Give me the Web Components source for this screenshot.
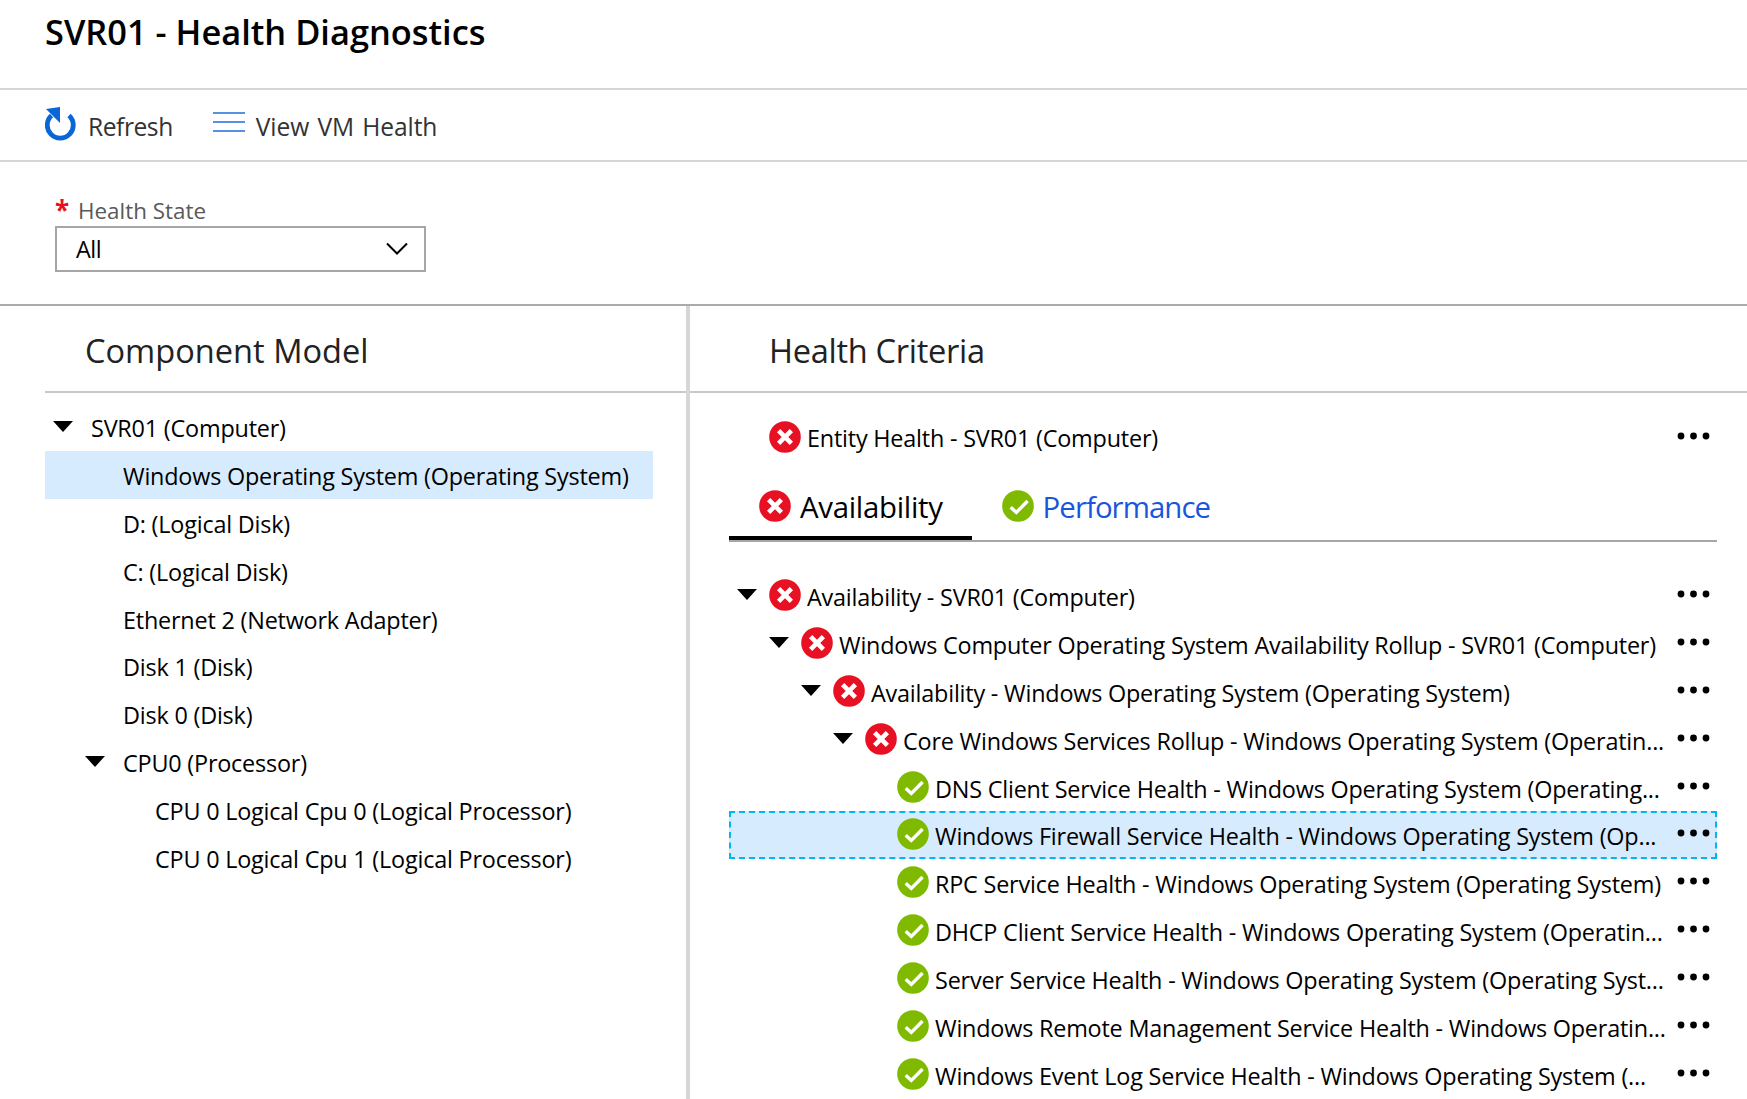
<!DOCTYPE html>
<html>
<head>
<meta charset="utf-8">
<title>SVR01 - Health Diagnostics</title>
<style>
    html, body { margin: 0; height: 100%; overflow: hidden; background: #fff; }
    body { font-family: "Open Sans", "Liberation Sans", sans-serif; color: #000; }
</style>
</head>
<body>
<health-page></health-page>

<script>
// status circle, red cross or green tick
class StatusIcon extends HTMLElement {
    connectedCallback() {
        let ok = this.getAttribute('state') === 'ok';
        let mark = ok
            ? '<path d="M8.7 17.2l5.6 5.2L25.6 11" fill="none" stroke="#fff" stroke-width="3.4"/>'
            : '<path d="M9.6 9.6l12.8 12.8M22.4 9.6L9.6 22.4" fill="none" stroke="#fff" stroke-width="4.6"/>';
        this.attachShadow({mode: 'open'}).innerHTML = `
        <style>
            :host { display: block; width: 32px; height: 32px; flex: none; }
            svg { display: block; }
        </style>
        <svg width="32" height="32" viewBox="0 0 32 32">
            <circle cx="16" cy="16" r="15.8" fill="${ok ? '#7fba00' : '#e81123'}"/>
            ${mark}
        </svg>`;
    }
}

class TreeTwist extends HTMLElement {
    connectedCallback() {
        this.attachShadow({mode: 'open'}).innerHTML = `
        <style>
            :host { display: block; width: 20px; height: 11px; }
            svg { display: block; }
        </style>
        <svg width="20" height="11" viewBox="0 0 20 11"><path d="M0 0h20L10 11z" fill="#000"/></svg>`;
    }
}

class MoreDots extends HTMLElement {
    connectedCallback() {
        this.attachShadow({mode: 'open'}).innerHTML = `
        <style>
            :host { display: block; width: 33px; height: 8px; }
            svg { display: block; }
        </style>
        <svg width="33" height="8" viewBox="0 0 33 8">
            <circle cx="4" cy="4" r="3.4"/><circle cx="16.5" cy="4" r="3.4"/><circle cx="29" cy="4" r="3.4"/>
        </svg>`;
    }
}

class ToolButton extends HTMLElement {
    connectedCallback() {
        this.attachShadow({mode: 'open'}).innerHTML = `
        <style>
            :host { display: flex; align-items: center; gap: 11px; color: #333; font-size: 24.6px; letter-spacing: -0.45px; }
            .ico { display: flex; margin-top: -2px; }
            span { line-height: 34px; position: relative; top: 2px; }
        </style>
        <div class="ico"><slot name="icon"></slot></div>
        <span><slot></slot></span>`;
    }
}

class PageToolbar extends HTMLElement {
    connectedCallback() {
        this.attachShadow({mode: 'open'}).innerHTML = `
        <style>
            :host { display: flex; align-items: center; gap: 40px; height: 72px; padding-left: 45px; box-sizing: border-box;
                    border-bottom: 2px solid #d6d6d6; }
        </style>
        <slot></slot>`;
    }
}

class StateSelect extends HTMLElement {
    connectedCallback() {
        this.attachShadow({mode: 'open'}).innerHTML = `
        <style>
            :host { display: block; height: 144px; padding: 32px 0 0 55px; box-sizing: border-box; border-bottom: 2px solid #ababab; }
            label { display: flex; height: 32px; font-size: 22.4px; line-height: 33px; color: #595959; }
            i { font-style: normal; font-weight: 700; color: #e81123; width: 23px; font-size: 26px; line-height: 26px; margin-top: 3px; }
            .box { width: 371px; height: 46px; box-sizing: border-box; border: 2px solid #a6a6a6; display: flex; align-items: center;
                   justify-content: space-between; padding: 0 16px 0 19px; font-size: 23.4px; letter-spacing: -0.5px; }
        </style>
        <label><i>*</i><slot name="label"></slot></label>
        <div class="box">
            <slot></slot>
            <svg width="22" height="14" viewBox="0 0 22 14"><path d="M1 1.5l10 10 10-10" fill="none" stroke="#000" stroke-width="2"/></svg>
        </div>`;
    }
}

class PanelTitle extends HTMLElement {
    connectedCallback() {
        this.attachShadow({mode: 'open'}).innerHTML = `
        <style>
            :host { display: block; height: 87px; box-sizing: border-box; border-bottom: 2px solid #c8c8c8; font-size: 32.6px;
                    line-height: 90px; color: #222; padding-left: var(--title-pad, 40px); overflow: hidden; }
        </style>
        <slot></slot>`;
    }
}

// row used by both trees, level and twist come from attributes
class TreeRow extends HTMLElement {
    connectedCallback() {
        let level = +this.getAttribute('level') || 0;
        let twist = this.hasAttribute('open') ? '<tree-twist></tree-twist>' : '';
        let state = this.getAttribute('state');
        let icon = state ? `<status-icon state="${state}"></status-icon>` : '';
        let dots = this.hasAttribute('more') ? '<more-dots></more-dots>' : '';
        this.attachShadow({mode: 'open'}).innerHTML = `
        <style>
            :host { display: flex; align-items: center; height: 47.9px; box-sizing: border-box; font-size: 23.4px; letter-spacing: -0.2px; color: #000; }
            :host([selected]) { background: #d6ebfd; }
            :host([focused]) { outline: 2px dashed #00b7f0; outline-offset: -2px; }
            .twist { flex: none; width: var(--twist-w, 46px); display: flex; padding-left: var(--twist-pad, 8px); box-sizing: border-box; margin-top: var(--twist-top, -4px); }
            status-icon { margin-right: 6px; margin-top: -2px; }
            .txt { flex: 1; min-width: 0; white-space: nowrap; overflow: hidden; line-height: 32px; margin-top: var(--txt-shift, 0); }
            more-dots { margin: -4px 7px 0 0; }
        </style>
        <div class="twist" style="margin-left:${level * 32}px">${twist}</div>
        ${icon}
        <div class="txt"><slot></slot></div>
        ${dots}`;
    }
}

class TabStrip extends HTMLElement {
    connectedCallback() {
        this.attachShadow({mode: 'open'}).innerHTML = `
        <style>
            :host { display: flex; height: 70px; margin: 0 30px 0 39px; border-bottom: 2px solid #a6a6a6; font-size: 29.4px; }
        </style>
        <slot></slot>`;
    }
}

class TabItem extends HTMLElement {
    connectedCallback() {
        let state = this.getAttribute('state');
        this.attachShadow({mode: 'open'}).innerHTML = `
        <style>
            :host { display: flex; align-items: center; gap: 9px; height: 70px; padding: 2px 30px 0; box-sizing: border-box; color: #1a56db; letter-spacing: -0.95px; }
            :host([active]) { border-bottom: 4px solid #000; color: #000; padding: 6px 29px 0 30px; letter-spacing: -0.3px; }
            span { position: relative; top: 1px; }
        </style>
        <status-icon state="${state}"></status-icon>
        <span><slot></slot></span>`;
    }
}

class HealthPage extends HTMLElement {
    connectedCallback() {
        this.attachShadow({mode: 'open'}).innerHTML = `
        <style>
            :host { display: block; height: 1099px; overflow: hidden; }
            h1 { margin: 0; height: 88px; box-sizing: border-box; padding: 9px 0 0 45px; font-size: 34.4px; font-weight: 600;
                 line-height: 46px; color: #000; }
            hr { margin: 0; border: 0; height: 2px; background: #d6d6d6; }
            .panels { display: grid; grid-template-columns: 686px 1fr; }
            .left { padding-left: 45px; }
            .left tree-row[selected] { margin-right: 33px; }
            .left .tree { padding-top: 10px; --txt-shift: 2px; --twist-top: -1px; }
            .right { border-left: 4px solid #d6d6d6; height: 800px; --twist-w: 40px; --twist-pad: 8px; }
            .right panel-title { --title-pad: 79px; letter-spacing: -0.3px; }
            .entity { padding: 21px 30px 0 39px; height: 48px; }
            .tab-gap { height: 8px; }
            .crit { padding: 30px 30px 0 39px; --txt-shift: 2px; --twist-top: -2px; }
        </style>
        <h1>SVR01 - Health Diagnostics</h1>
        <hr>
        <page-toolbar>
            <tool-button>
                <svg slot="icon" width="32" height="34" viewBox="0 0 32 34">
                    <path d="M24 8.5A13 13 0 1 1 6.5 8.5" fill="none" stroke="#0a66d6" stroke-width="4.8"/>
                    <path d="M1 2L15 0V16z" fill="#0a66d6"/>
                </svg>
                Refresh
            </tool-button>
            <tool-button style="letter-spacing:-0.1px;word-spacing:2px">
                <svg slot="icon" style="margin-bottom:4px" width="32" height="20" viewBox="0 0 32 20">
                    <path d="M0 1h32M0 10h32M0 19h32" stroke="#1f6fd6" stroke-width="1.6"/>
                </svg>
                View VM Health
            </tool-button>
        </page-toolbar>
        <state-select><span slot="label">Health State</span>All</state-select>
        <div class="panels">
            <div class="left">
                <panel-title>Component Model</panel-title>
                <div class="tree">
                    <tree-row open>SVR01 (Computer)</tree-row>
                    <tree-row level="1" selected>Windows Operating System (Operating System)</tree-row>
                    <tree-row level="1">D: (Logical Disk)</tree-row>
                    <tree-row level="1">C: (Logical Disk)</tree-row>
                    <tree-row level="1">Ethernet 2 (Network Adapter)</tree-row>
                    <tree-row level="1">Disk 1 (Disk)</tree-row>
                    <tree-row level="1">Disk 0 (Disk)</tree-row>
                    <tree-row level="1" open>CPU0 (Processor)</tree-row>
                    <tree-row level="2">CPU 0 Logical Cpu 0 (Logical Processor)</tree-row>
                    <tree-row level="2">CPU 0 Logical Cpu 1 (Logical Processor)</tree-row>
                </div>
            </div>
            <div class="right">
                <panel-title>Health Criteria</panel-title>
                <div class="entity"><tree-row state="bad" more>Entity Health - SVR01 (Computer)</tree-row></div>
                <div class="tab-gap"></div>
                <tab-strip>
                    <tab-item state="bad" active>Availability</tab-item>
                    <tab-item state="ok">Performance</tab-item>
                </tab-strip>
                <div class="crit">
                    <tree-row state="bad" more open>Availability - SVR01 (Computer)</tree-row>
                    <tree-row level="1" state="bad" more open>Windows Computer Operating System Availability Rollup - SVR01 (Computer)</tree-row>
                    <tree-row level="2" state="bad" more open>Availability - Windows Operating System (Operating System)</tree-row>
                    <tree-row level="3" state="bad" more open>Core Windows Services Rollup - Windows Operating System (Operatin...</tree-row>
                    <tree-row level="4" state="ok" more>DNS Client Service Health - Windows Operating System (Operating...</tree-row>
                    <tree-row level="4" state="ok" more selected focused>Windows Firewall Service Health - Windows Operating System (Op...</tree-row>
                    <tree-row level="4" state="ok" more>RPC Service Health - Windows Operating System (Operating System)</tree-row>
                    <tree-row level="4" state="ok" more>DHCP Client Service Health - Windows Operating System (Operatin...</tree-row>
                    <tree-row level="4" state="ok" more>Server Service Health - Windows Operating System (Operating Syst...</tree-row>
                    <tree-row level="4" state="ok" more>Windows Remote Management Service Health - Windows Operatin...</tree-row>
                    <tree-row level="4" state="ok" more>Windows Event Log Service Health - Windows Operating System (...</tree-row>
                </div>
            </div>
        </div>`;
    }
}

customElements.define('status-icon', StatusIcon);
customElements.define('tree-twist', TreeTwist);
customElements.define('more-dots', MoreDots);
customElements.define('tool-button', ToolButton);
customElements.define('page-toolbar', PageToolbar);
customElements.define('state-select', StateSelect);
customElements.define('panel-title', PanelTitle);
customElements.define('tree-row', TreeRow);
customElements.define('tab-strip', TabStrip);
customElements.define('tab-item', TabItem);
customElements.define('health-page', HealthPage);
</script>
</body>
</html>
